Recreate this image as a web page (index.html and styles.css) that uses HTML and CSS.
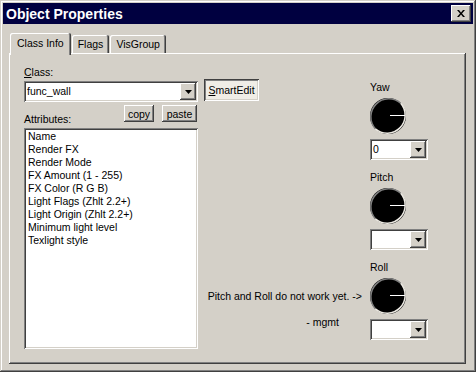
FILE: index.html
```html
<!DOCTYPE html>
<html lang="en">
<head>
  <meta charset="UTF-8">
  <title>Object Properties</title>
  <link rel="stylesheet" href="styles.css">
</head>
<body>
  <div class="window">
    <div class="titlebar">
      <span class="title">Object Properties</span>
      <button class="close">
        <svg width="8" height="7" viewBox="0 0 8 7"><path d="M0 0h2l2 2.5 2-2.5h2l-3 3.5 3 3.5h-2l-2-2.5-2 2.5h-2l3-3.5z" fill="#000"/></svg>
      </button>
    </div>

    <div class="body">
      <div class="tabs">
        <div class="tab active">Class Info</div>
        <div class="tab">Flags</div>
        <div class="tab">VisGroup</div>
      </div>

      <div class="panel">
        <div class="left">
          <div class="label"><u>C</u>lass:</div>
          <div class="combo class-combo">
            <span class="value">func_wall</span>
            <span class="drop"><svg width="7" height="4" viewBox="0 0 7 4"><path d="M0 0h7l-3.5 4z" fill="#000"/></svg></span>
          </div>
          <div class="attr-row">
            <span class="label">Attributes:</span>
            <div class="btns">
              <button class="btn copy">copy</button>
              <button class="btn paste">paste</button>
            </div>
          </div>
          <ul class="list">
            <li>Name</li>
            <li>Render FX</li>
            <li>Render Mode</li>
            <li>FX Amount (1 - 255)</li>
            <li>FX Color (R G B)</li>
            <li>Light Flags (Zhlt 2.2+)</li>
            <li>Light Origin (Zhlt 2.2+)</li>
            <li>Minimum light level</li>
            <li>Texlight style</li>
          </ul>
        </div>

        <div class="middle">
          <button class="smartedit"><u>S</u>martEdit</button>
          <div class="note">Pitch and Roll do not work yet. -&gt;</div>
          <div class="note sig">- mgmt</div>
        </div>

        <div class="dials">
          <div class="dial">
            <div class="dial-label">Yaw</div>
            <svg class="knob" width="38" height="38" viewBox="0 0 38 38">
              <circle cx="19" cy="19" r="18" fill="#000"/>
              <path d="M31.7 6.3A18 18 0 0 0 6.3 31.7" fill="none" stroke="#808080" stroke-width="1.5"/>
              <path d="M6.3 31.7A18 18 0 0 0 31.7 6.3" fill="none" stroke="#ece9e2" stroke-width="1.5"/>
              <line x1="21" y1="18.5" x2="36" y2="18.5" stroke="#fff" stroke-width="1"/>
            </svg>
            <div class="combo small">
              <span class="value">0</span>
              <span class="drop"><svg width="7" height="4" viewBox="0 0 7 4"><path d="M0 0h7l-3.5 4z" fill="#000"/></svg></span>
            </div>
          </div>
          <div class="dial">
            <div class="dial-label">Pitch</div>
            <svg class="knob" width="38" height="38" viewBox="0 0 38 38">
              <circle cx="19" cy="19" r="18" fill="#000"/>
              <path d="M31.7 6.3A18 18 0 0 0 6.3 31.7" fill="none" stroke="#808080" stroke-width="1.5"/>
              <path d="M6.3 31.7A18 18 0 0 0 31.7 6.3" fill="none" stroke="#ece9e2" stroke-width="1.5"/>
              <line x1="21" y1="18.5" x2="36" y2="18.5" stroke="#fff" stroke-width="1"/>
            </svg>
            <div class="combo small">
              <span class="value"></span>
              <span class="drop"><svg width="7" height="4" viewBox="0 0 7 4"><path d="M0 0h7l-3.5 4z" fill="#000"/></svg></span>
            </div>
          </div>
          <div class="dial">
            <div class="dial-label">Roll</div>
            <svg class="knob" width="38" height="38" viewBox="0 0 38 38">
              <circle cx="19" cy="19" r="18" fill="#000"/>
              <path d="M31.7 6.3A18 18 0 0 0 6.3 31.7" fill="none" stroke="#808080" stroke-width="1.5"/>
              <path d="M6.3 31.7A18 18 0 0 0 31.7 6.3" fill="none" stroke="#ece9e2" stroke-width="1.5"/>
              <line x1="21" y1="18.5" x2="36" y2="18.5" stroke="#fff" stroke-width="1"/>
            </svg>
            <div class="combo small">
              <span class="value"></span>
              <span class="drop"><svg width="7" height="4" viewBox="0 0 7 4"><path d="M0 0h7l-3.5 4z" fill="#000"/></svg></span>
            </div>
          </div>
        </div>
      </div>
    </div>
  </div>
</body>
</html>
```

FILE: styles.css
```css
body {
  margin: 0;
  background: #d4d0c8;
  font-family: "Liberation Sans", Arial, sans-serif;
  font-size: 10.5px;
  color: #000;
}
.window {
  width: 476px;
  height: 372px;
  box-sizing: border-box;
  padding: 3px;
  background: #d4d0c8;
  box-shadow: inset -1px -1px #404040, inset 1px 1px #d4d0c8,
              inset -2px -2px #808080, inset 2px 2px #fff;
}
.titlebar {
  height: 21px;
  background: #000040;
  display: flex;
  align-items: center;
  justify-content: space-between;
  padding: 0 2px 0 3px;
}
.title {
  color: #fff;
  font-weight: bold;
  font-size: 14px;
}
.close {
  width: 20px;
  height: 17px;
  padding: 0;
  border: none;
  background: #d4d0c8;
  display: flex;
  align-items: center;
  justify-content: center;
  box-shadow: inset -1px -1px #404040, inset 1px 1px #fff,
              inset -2px -2px #808080;
}
.body {
  padding: 9px 7px 5px 6px;
}

/* tabs */
.tabs {
  display: flex;
  align-items: flex-end;
  height: 20px;
  position: relative;
  z-index: 1;
}
.tab {
  height: 18px;
  line-height: 18px;
  padding: 0 6px;
  border-radius: 2px 2px 0 0;
  background: #d4d0c8;
  box-shadow: inset -1px 0 #404040, inset 1px 1px #fff, inset -2px 0 #808080;
}
.tab.active {
  height: 22px;
  line-height: 20px;
  margin: 0 0 -2px 1px;
  padding: 0 7px;
  box-shadow: inset -1px 0 #404040, inset 1px 1px #fff, inset -2px 0 #808080;
}
.tab + .tab {
  margin-left: 1px;
}

.panel {
  height: 311px;
  box-sizing: border-box;
  padding: 13px 35px 0 15px;
  display: flex;
  box-shadow: inset -1px -1px #404040, inset 1px 1px #fff,
              inset -2px -2px #808080;
}
.left {
  width: 174px;
  display: flex;
  flex-direction: column;
}
.label {
  line-height: 13px;
}
.combo {
  display: flex;
  height: 21px;
  box-sizing: border-box;
  padding: 2px;
  background: #fff;
  box-shadow: inset 1px 1px #808080, inset -1px -1px #fff,
              inset 2px 2px #404040, inset -2px -2px #d4d0c8;
}
.class-combo {
  margin-top: 2px;
}
.value {
  flex: 1;
  padding-left: 1px;
  line-height: 17px;
}
.drop {
  width: 16px;
  height: 17px;
  display: flex;
  align-items: center;
  justify-content: center;
  background: #d4d0c8;
  box-shadow: inset -1px -1px #404040, inset 1px 1px #fff,
              inset -2px -2px #808080;
}
.attr-row {
  display: flex;
  justify-content: space-between;
  margin-top: 3px;
}
.attr-row .label {
  margin-top: 8px;
}
.btns {
  display: flex;
  gap: 8px;
  padding-right: 1px;
}
.btn, .smartedit {
  font-family: inherit;
  font-size: inherit;
  padding: 0;
  border: none;
  background: #d4d0c8;
  box-shadow: inset -1px -1px #404040, inset 1px 1px #fff,
              inset -2px -2px #808080;
}
.btn {
  height: 17px;
}
.copy { width: 30px; }
.paste { width: 35px; }
.list {
  list-style: none;
  margin: 2px 0 0;
  padding: 2px 2px 2px 4px;
  height: 221px;
  box-sizing: border-box;
  background: #fff;
  box-shadow: inset 1px 1px #808080, inset -1px -1px #fff,
              inset 2px 2px #404040, inset -2px -2px #d4d0c8;
}
.list li {
  line-height: 13px;
  white-space: nowrap;
}

.middle {
  width: 171px;
  display: flex;
  flex-direction: column;
}
.smartedit {
  align-self: flex-start;
  margin: 13px 0 0 6px;
  width: 55px;
  height: 22px;
  background: #f0ede6;
  box-shadow: inset 1px 1px #404040, inset -1px -1px #fff,
              inset 2px 2px #808080, inset -2px -2px #d4d0c8;
}
.note {
  line-height: 13px;
  text-align: right;
  padding-right: 7px;
  margin-top: 189px;
  white-space: nowrap;
}
.note.sig {
  margin-top: 13px;
  padding-right: 30px;
}

.dials {
  width: 60px;
  margin-top: 15px;
}
.dial {
  display: flex;
  flex-direction: column;
  margin-bottom: 11px;
}
.dial-label {
  line-height: 13px;
  padding-left: 1px;
}
.knob {
  display: block;
  margin: 3px 0 4px;
}
.combo.small {
  width: 58px;
  margin-left: 1px;
}
```
